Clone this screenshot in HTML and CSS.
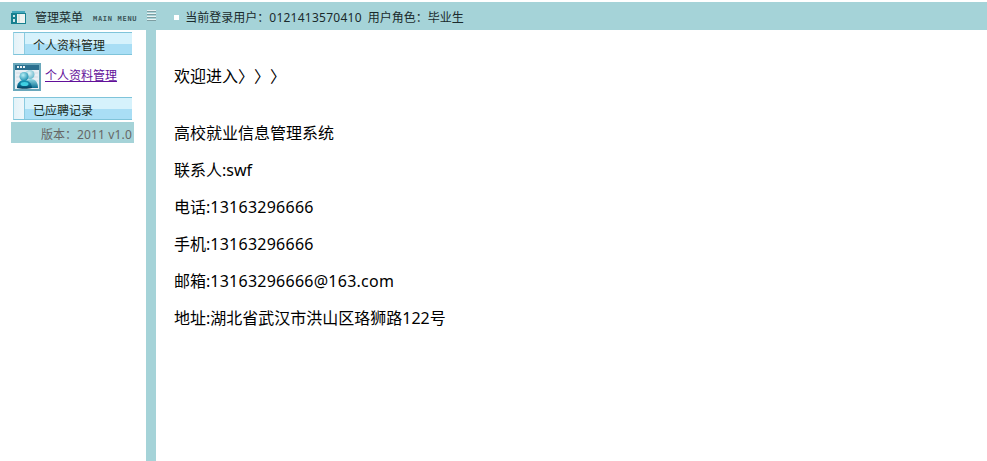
FILE: index.html
```html
<!DOCTYPE html>
<html lang="zh-CN">

<head>
    <title>管理菜单</title>
    <link rel="stylesheet" href="styles.css">
</head>

<body>
    <div class="topbar">
        <svg class="menu-icon" width="15" height="13" viewBox="0 0 15 13">
            <rect x="1" y="0" width="13" height="2" fill="#45a9bd"/>
            <rect x="0" y="2" width="15" height="11" fill="#17808f"/>
            <rect x="6" y="3" width="8" height="9" fill="#eef4f1"/>
            <rect x="7" y="3" width="2" height="9" fill="#d8e4e0"/>
            <rect x="1" y="3" width="4" height="4" fill="#17808f"/>
            <rect x="2" y="4" width="2" height="2" fill="#cfe8ea"/>
            <rect x="2" y="8" width="2" height="3" fill="#cfe8ea"/>
        </svg>
        <span class="menu-title">管理菜单</span>
        <span class="menu-sub">MAIN MENU</span>
        <span class="grip"></span>
        <span class="square"></span>
        <span class="user-info">当前登录用户：<span class="num">0121413570410</span></span>
        <span class="user-role">用户角色：毕业生</span>
    </div>

    <div class="content">
        <div class="sidebar">
            <div class="side-head"><span class="side-cell"></span><span class="side-label">个人资料管理</span></div>
            <div class="side-item">
                <svg width="28" height="28" viewBox="0 0 28 28">
                    <defs>
                        <linearGradient id="body-back" x1="0" y1="0" x2="0" y2="1">
                            <stop offset="0" stop-color="#8fd8e4"/>
                            <stop offset="1" stop-color="#0d6f92"/>
                        </linearGradient>
                        <linearGradient id="body-front" x1="0" y1="0" x2="0" y2="1">
                            <stop offset="0" stop-color="#1c9dbb"/>
                            <stop offset="0.6" stop-color="#0b6a8e"/>
                            <stop offset="1" stop-color="#033a58"/>
                        </linearGradient>
                        <radialGradient id="head-back" cx="0.4" cy="0.35" r="0.7">
                            <stop offset="0" stop-color="#e4f6f8"/>
                            <stop offset="1" stop-color="#62b6cb"/>
                        </radialGradient>
                        <radialGradient id="head-front" cx="0.4" cy="0.35" r="0.7">
                            <stop offset="0" stop-color="#b8f0f6"/>
                            <stop offset="1" stop-color="#1288ab"/>
                        </radialGradient>
                    </defs>
                    <rect x="1" y="1" width="26" height="26" fill="#e9eff4" stroke="#6aa8bc" stroke-width="2"/>
                    <rect x="2" y="2" width="24" height="5" fill="#2a6f8f"/>
                    <rect x="4" y="3" width="2" height="2" fill="#eef5f7"/>
                    <rect x="7" y="3" width="2" height="2" fill="#eef5f7"/>
                    <rect x="10" y="3" width="2" height="2" fill="#eef5f7"/>
                    <path d="M3 10h22M3 14h22M3 18h22M3 22h22" stroke="#d3dde5" stroke-width="1"/>
                    <circle cx="17" cy="11.5" r="4.5" fill="url(#head-back)"/>
                    <path d="M12 25c0-6 2-9 6-9s7 3 7 9z" fill="url(#body-back)"/>
                    <circle cx="11" cy="13.5" r="4.5" fill="url(#head-front)"/>
                    <path d="M4 25c0-5 3-8 7-8s8 3 8 8c-3 1-12 1-15 0z" fill="url(#body-front)"/>
                    <ellipse cx="11.5" cy="21" rx="4" ry="2" fill="#3fd0e2"/>
                </svg>
                <a href="#" class="side-link">个人资料管理</a>
            </div>
            <div class="side-head"><span class="side-cell"></span><span class="side-label">已应聘记录</span></div>
            <div class="version">版本：<span class="num">2011 v1.0</span></div>
        </div>
        <div class="divider"></div>
        <div class="main">
            <p class="welcome">欢迎进入〉〉〉</p>
            <p>高校就业信息管理系统</p>
            <p>联系人:swf</p>
            <p>电话:<span class="num">13163296666</span></p>
            <p>手机:<span class="num">13163296666</span></p>
            <p>邮箱:<span class="num">13163296666@163.com</span></p>
            <p>地址:湖北省武汉市洪山区珞狮路122号</p>
        </div>
    </div>
</body>

</html>
```

FILE: styles.css
```css
html,
body {
    height: 100%;
}

body {
    margin: 0;
    padding-top: 2px;
    box-sizing: border-box;
    display: flex;
    flex-direction: column;
    overflow: hidden;
    font-family: "Noto Sans", "Noto Sans CJK SC", sans-serif;
    font-size: 12px;
    color: #000;
    background-color: #fff;
}

.topbar {
    height: 28px;
    padding-top: 2px;
    box-sizing: border-box;
    flex-shrink: 0;
    display: flex;
    align-items: center;
    background-color: #a5d3d8;
    color: #1a2a2c;
}

.num {
    letter-spacing: 0.25px;
}

.menu-icon {
    margin-left: 11px;
}

.menu-title {
    margin-left: 9px;
}

.menu-sub {
    margin-left: 10px;
    margin-top: 3px;
    font-family: "DejaVu Sans Mono", monospace;
    font-size: 7px;
    font-weight: bold;
    letter-spacing: 0.7px;
    color: #3c5558;
}

.grip {
    width: 9px;
    height: 12px;
    margin-left: 10px;
    margin-top: -2px;
    background: repeating-linear-gradient(#e8f2f2 0, #e8f2f2 1px, #7d9ea2 1px, #7d9ea2 2px, #a5d3d8 2px, #a5d3d8 3px);
}

.square {
    width: 5px;
    height: 5px;
    margin-left: 18px;
    background-color: #fff;
}

.user-info {
    margin-left: 6px;
}

.user-role {
    margin-left: 6px;
}

.content {
    flex: 1;
    display: flex;
}

.sidebar {
    width: 123px;
    padding: 2px 12px 0 11px;
    flex-shrink: 0;
}

.side-head {
    height: 23px;
    margin-left: 2px;
    width: 119px;
    display: flex;
    border-top: 1px solid #7fc4da;
    border-bottom: 1px solid #7fc4da;
    border-left: 1px solid #9fd6e6;
    box-sizing: border-box;
    background: linear-gradient(#d6f2fc 0, #d6f2fc 50%, #a9def5 50%, #a9def5 100%);
}

.side-cell {
    width: 10px;
    background: linear-gradient(90deg, #e4f2f8, #eef7fb);
    border-right: 1px solid #8ccbe0;
}

.side-label {
    margin-left: 8px;
    line-height: 26px;
    color: #1a2a1a;
}

.side-item {
    height: 42px;
    margin-left: 2px;
    display: flex;
    align-items: center;
    gap: 4px;
    padding-top: 2px;
    box-sizing: border-box;
}

.side-link {
    margin-top: -4px;
    color: #62109a;
}

.version {
    height: 21px;
    margin-top: 2px;
    padding-right: 2px;
    line-height: 26px;
    text-align: right;
    color: #666;
    background-color: #a5d3d8;
}

.version .num {
    letter-spacing: 0.15px;
}

.divider {
    width: 10px;
    flex-shrink: 0;
    background-color: #a5d3d8;
}

.main {
    flex: 1;
    padding: 35px 18px 0;
    font-size: 16px;
}

.main p {
    margin: 0 0 15px;
    line-height: 22px;
}

.main .welcome {
    margin-bottom: 35px;
    text-spacing-trim: space-all;
}
```
